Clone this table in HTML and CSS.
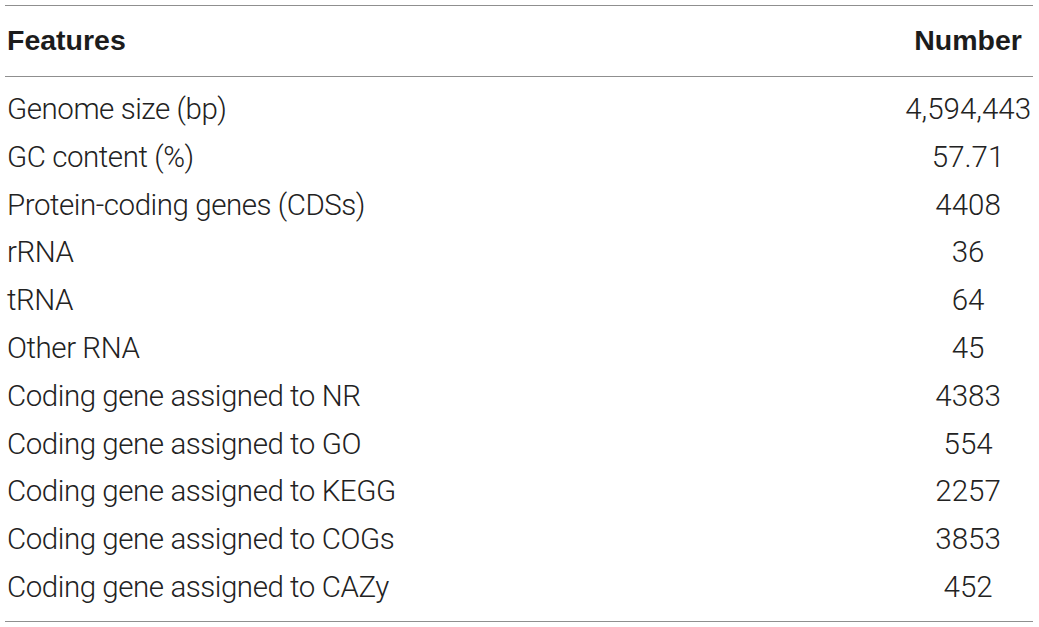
FILE: index.html
```html
<!DOCTYPE html>
<html>
<head>
<meta charset="utf-8">
<link rel="stylesheet" href="styles.css">
</head>
<body>
<table class="data">
  <thead>
    <tr><th class="feat">Features</th><th class="num">Number</th></tr>
  </thead>
  <tbody>
    <tr class="first"><td class="feat">Genome size (bp)</td><td class="num">4,594,443</td></tr>
    <tr><td class="feat">GC content (%)</td><td class="num">57.71</td></tr>
    <tr><td class="feat">Protein-coding genes (CDSs)</td><td class="num">4408</td></tr>
    <tr><td class="feat">rRNA</td><td class="num">36</td></tr>
    <tr><td class="feat">tRNA</td><td class="num">64</td></tr>
    <tr><td class="feat">Other RNA</td><td class="num">45</td></tr>
    <tr><td class="feat">Coding gene assigned to NR</td><td class="num">4383</td></tr>
    <tr><td class="feat">Coding gene assigned to GO</td><td class="num">554</td></tr>
    <tr><td class="feat">Coding gene assigned to KEGG</td><td class="num">2257</td></tr>
    <tr><td class="feat">Coding gene assigned to COGs</td><td class="num">3853</td></tr>
    <tr class="last"><td class="feat">Coding gene assigned to CAZy</td><td class="num">452</td></tr>
  </tbody>
</table>
</body>
</html>
```

FILE: styles.css
```css
html, body {
  margin: 0;
  padding: 0;
  background: #ffffff;
}

body {
  padding: 5px 6px 0 5px;
  font-family: "Liberation Sans", Arial, Helvetica, sans-serif;
}

.data {
  width: 1028px;
  border-collapse: collapse;
  font-size: 28px;
  color: #2a2a2a;
}

.data th {
  font-weight: bold;
  font-size: 28.5px;
  color: #1c1c1c;
  line-height: 32px;
  padding: 18px 2px 20px 2px;
  border-top: 1.5px solid #8f8f8f;
  border-bottom: 1.5px solid #8f8f8f;
}

.data td {
  font-family: Roboto, "Liberation Sans", Arial, sans-serif;
  font-weight: 300;
  font-size: 29.5px;
  letter-spacing: -0.45px;
  color: #222222;
  line-height: 47.8px;
  padding: 0 2px;
  white-space: nowrap;
}

.data .feat {
  text-align: left;
}

.data .num {
  text-align: center;
  width: 1px;
  letter-spacing: 0;
}

.data tr.first td {
  padding-top: 9px;
}

.data tr.last td {
  padding-bottom: 9px;
  border-bottom: 1.5px solid #8f8f8f;
}
```
